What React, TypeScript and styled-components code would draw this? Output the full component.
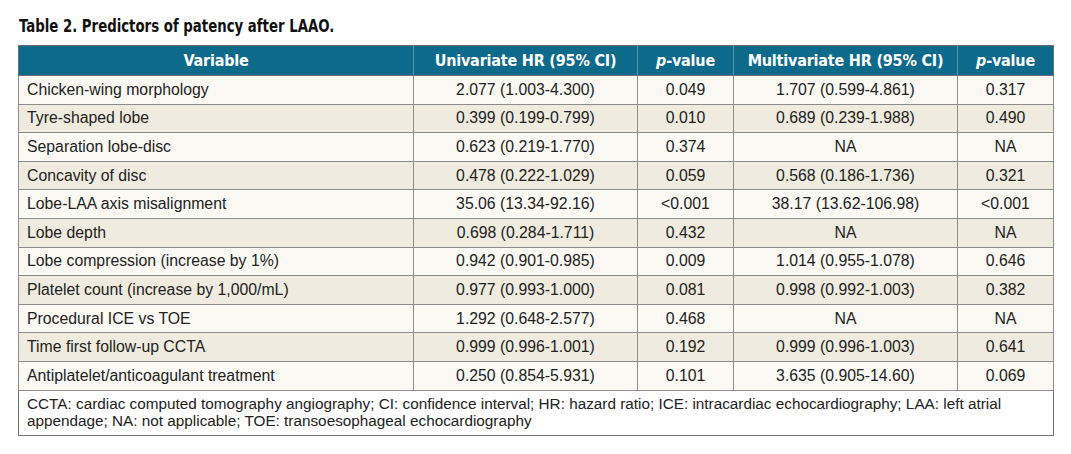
import React from 'react'
import styled, { createGlobalStyle } from 'styled-components'

const GlobalStyle = createGlobalStyle`
    html, body {
        margin: 0;
        padding: 0;
        background: #ffffff;
    }
`

const Page = styled.div`
    padding: 15px 0 0 18px;
    width: 1035px;
`

const Title = styled.h2`
    margin: 0 0 8px 1px;
    display: inline-block;
    transform: scaleX(0.845);
    transform-origin: left center;
    white-space: nowrap;
    font-family: 'DejaVu Sans Condensed', 'Liberation Sans', sans-serif;
    font-stretch: condensed;
    font-weight: bold;
    font-size: 17.5px;
    line-height: 22px;
    color: #111;
`

const Table = styled.table`
    width: 1035px;
    border-collapse: collapse;
    table-layout: fixed;
    border: 1px solid #6e6e6e;
    font-family: 'Liberation Sans', Arial, sans-serif;
    font-size: 15.8px;
    color: #222;
`

const HeadCell = styled.th`
    height: 29px;
    padding: 0;
    background: #0d6a8a;
    color: #ffffff;
    font-family: 'DejaVu Sans Condensed', 'Liberation Sans', sans-serif;
    font-stretch: condensed;
    font-weight: bold;
    font-size: 16px;
    letter-spacing: -0.2px;
    text-align: center;
    white-space: nowrap;
    border-left: 1px solid #5a93a8;
    border-bottom: 1px solid #6e6e6e;

    &:first-child {
        border-left: none;
    }

    i {
        font-style: italic;
    }
`

const Row = styled.tr<{ shaded: boolean }>`
    background: ${props => (props.shaded ? '#efebdf' : '#fbf9f4')};
`

const Cell = styled.td<{ left?: boolean }>`
    height: 27.6px;
    padding: 0 ${props => (props.left ? '8px' : '0')};
    text-align: ${props => (props.left ? 'left' : 'center')};
    border: 1px solid #8c8c8c;
    white-space: nowrap;
`

const Note = styled.td`
    background: #ffffff;
    padding: 4px 8px 6px 8px;
    font-size: 15.3px;
    line-height: 17px;
    border-top: 1px solid #8c8c8c;
`

const rows = [
    ['Chicken-wing morphology', '2.077 (1.003-4.300)', '0.049', '1.707 (0.599-4.861)', '0.317'],
    ['Tyre-shaped lobe', '0.399 (0.199-0.799)', '0.010', '0.689 (0.239-1.988)', '0.490'],
    ['Separation lobe-disc', '0.623 (0.219-1.770)', '0.374', 'NA', 'NA'],
    ['Concavity of disc', '0.478 (0.222-1.029)', '0.059', '0.568 (0.186-1.736)', '0.321'],
    ['Lobe-LAA axis misalignment', '35.06 (13.34-92.16)', '<0.001', '38.17 (13.62-106.98)', '<0.001'],
    ['Lobe depth', '0.698 (0.284-1.711)', '0.432', 'NA', 'NA'],
    ['Lobe compression (increase by 1%)', '0.942 (0.901-0.985)', '0.009', '1.014 (0.955-1.078)', '0.646'],
    ['Platelet count (increase by 1,000/mL)', '0.977 (0.993-1.000)', '0.081', '0.998 (0.992-1.003)', '0.382'],
    ['Procedural ICE vs TOE', '1.292 (0.648-2.577)', '0.468', 'NA', 'NA'],
    ['Time first follow-up CCTA', '0.999 (0.996-1.001)', '0.192', '0.999 (0.996-1.003)', '0.641'],
    ['Antiplatelet/anticoagulant treatment', '0.250 (0.854-5.931)', '0.101', '3.635 (0.905-14.60)', '0.069'],
]

const App = () => {
    return (
        <Page>
            <GlobalStyle />
            <Title>Table 2. Predictors of patency after LAAO.</Title>
            <Table>
                <colgroup>
                    <col style={{ width: 395 }} />
                    <col style={{ width: 224 }} />
                    <col style={{ width: 96 }} />
                    <col style={{ width: 224 }} />
                    <col style={{ width: 96 }} />
                </colgroup>
                <thead>
                    <tr>
                        <HeadCell>Variable</HeadCell>
                        <HeadCell>Univariate HR (95% CI)</HeadCell>
                        <HeadCell><i>p</i>-value</HeadCell>
                        <HeadCell>Multivariate HR (95% CI)</HeadCell>
                        <HeadCell><i>p</i>-value</HeadCell>
                    </tr>
                </thead>
                <tbody>
                    {rows.map((row, i) => (
                        <Row key={row[0]} shaded={i % 2 === 1}>
                            {row.map((value, j) => (
                                <Cell key={j} left={j === 0}>{value}</Cell>
                            ))}
                        </Row>
                    ))}
                    <tr>
                        <Note colSpan={5}>
                            CCTA: cardiac computed tomography angiography; CI: confidence interval; HR: hazard ratio; ICE: intracardiac echocardiography; LAA: left atrial
                            <br />
                            appendage; NA: not applicable; TOE: transoesophageal echocardiography
                        </Note>
                    </tr>
                </tbody>
            </Table>
        </Page>
    )
}

export default App
